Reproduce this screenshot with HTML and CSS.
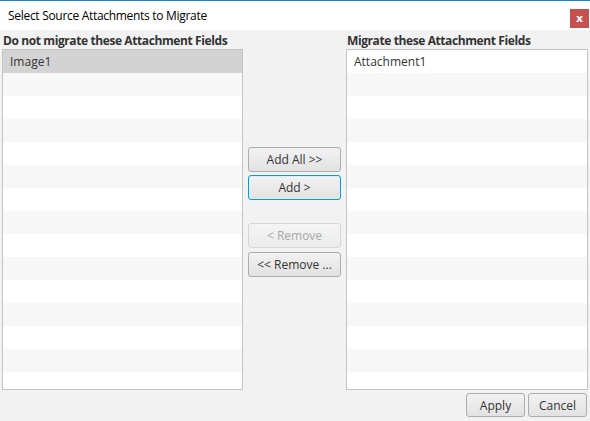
FILE: index.html
```html
<!DOCTYPE html>
<html lang="en">
<head>
  <meta charset="UTF-8" />
  <title>Select Source Attachments to Migrate</title>
  <link rel="stylesheet" href="styles.css">
</head>
<body>
<div class="dialog">

  <!-- Title bar -->
  <div class="title-bar">
    <span class="title">Select Source Attachments to Migrate</span>
    <button class="close-btn">x</button>
  </div>

  <!-- Field pickers -->
  <div class="content">
    <div class="columns">
      <div class="field-column left">
        <div class="column-label">Do not migrate these Attachment Fields</div>
        <ul class="field-list" id="source-list"></ul>
      </div>

      <div class="move-buttons">
        <button class="btn">Add All &gt;&gt;</button>
        <button class="btn focused">Add &gt;</button>
        <div class="spacer"></div>
        <button class="btn" disabled>&lt; Remove</button>
        <button class="btn">&lt;&lt; Remove ...</button>
      </div>

      <div class="field-column">
        <div class="column-label">Migrate these Attachment Fields</div>
        <ul class="field-list" id="target-list"></ul>
      </div>
    </div>

    <div class="footer">
      <button class="btn small">Apply</button>
      <button class="btn small">Cancel</button>
    </div>
  </div>
</div>

<script>
  // fill both lists with empty striped rows, like a list view does
  const ROWS = 15;

  function fillList(id, items, selected) {
    const list = document.getElementById(id);
    for (let i = 0; i < ROWS; i++) {
      const li = document.createElement("li");
      li.className = "row";
      if (items[i]) li.textContent = items[i];
      if (i === selected) li.classList.add("selected");
      list.appendChild(li);
    }
  }

  fillList("source-list", ["Image1"], 0);
  fillList("target-list", ["Attachment1"], -1);
</script>
</body>
</html>
```

FILE: styles.css
```css
body {
  margin: 0;
  font-family: "Open Sans", "Noto Sans", sans-serif;
  font-size: 12px;
  color: #333;
  background: #f2f2f2;
}

.dialog {
  width: 590px;
  height: 421px;
  display: flex;
  flex-direction: column;
  overflow: hidden;
}

/* Title bar */
.title-bar {
  height: 29px;
  border-top: 1px solid #1883d7;
  background: #fff;
  display: flex;
  align-items: center;
  justify-content: space-between;
  padding: 0 1px 0 8px;
}

.title {
  color: #000;
  font-size: 12px;
  letter-spacing: -0.3px;
}

.close-btn {
  width: 19px;
  height: 19px;
  margin-top: 5px;
  border: none;
  padding: 0;
  background: #c75050;
  color: #fff;
  font-family: "DejaVu Sans", sans-serif;
  font-size: 11px;
  font-weight: bold;
  line-height: 17px;
}

/* Main area */
.content {
  flex: 1;
  display: flex;
  flex-direction: column;
  padding: 2px 2px 0 2px;
}

.columns {
  display: flex;
}

.field-column {
  display: flex;
  flex-direction: column;
  width: 242px;
}

.field-column.left {
  width: 241px;
}

.column-label {
  height: 17px;
  line-height: 17px;
  font-weight: bold;
  color: #333;
  padding-left: 1px;
  letter-spacing: -0.4px;
  white-space: nowrap;
}

.field-list {
  list-style: none;
  margin: 0;
  padding: 0;
  height: 339px;
  overflow: hidden;
  background: #fff;
  border: 1px solid #c4c4c4;
}

.row {
  height: 23px;
  line-height: 23px;
  padding-left: 7px;
  background: #fff;
}

.row:nth-child(even) {
  background: #f7f7f7;
}

.row.selected {
  background: #d3d3d3;
}

/* Buttons between lists */
.move-buttons {
  flex: 1;
  display: flex;
  flex-direction: column;
  align-items: center;
  gap: 3px;
  padding-top: 115px;
}

.spacer {
  height: 17px;
}

.move-buttons .btn:last-child {
  margin-top: 1px;
}

.btn {
  width: 93px;
  height: 25px;
  padding: 0;
  font-family: "Open Sans", "Noto Sans", sans-serif;
  font-size: 12px;
  color: #333;
  background: linear-gradient(#f2f2f2, #e2e2e2);
  border: 1px solid #acacac;
  border-radius: 3px;
  cursor: pointer;
}

.btn.focused {
  border-color: #0a9bd6;
  box-shadow: inset 0 0 0 1px #d8eef8;
}

.btn:disabled {
  color: #a8a8a8;
  border-color: #d6d6d6;
  background: linear-gradient(#f4f4f4, #ececec);
  cursor: default;
}

/* Bottom buttons */
.footer {
  display: flex;
  justify-content: flex-end;
  gap: 3px;
  padding-top: 3px;
  padding-right: 1px;
}

.btn.small {
  width: 59px;
  height: 24px;
}
```
